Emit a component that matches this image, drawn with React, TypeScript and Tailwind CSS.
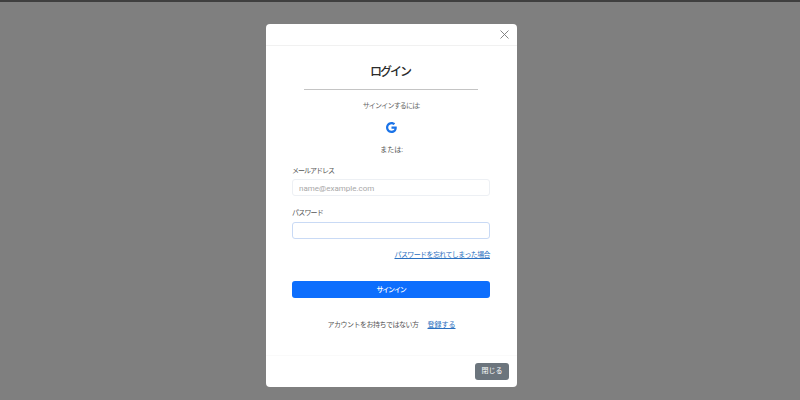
import React from 'react'

const FONT = "font-['Roboto','Noto_Sans_CJK_JP',sans-serif]"

function GoogleMark() {
	return (
		<svg width="11" height="11" viewBox="0 0 24 24" aria-hidden="true">
			<path
				fill="#1a73e8"
				d="M23.500 12.300c0-.9-.1-1.700-.2-2.400H12v4.600h6.500c-.3 1.500-1.100 2.700-2.400 3.600v3h3.800c2.300-2.100 3.600-5.200 3.600-8.800zM12 24c3.200 0 6-1.100 7.900-2.900l-3.800-3c-1.100.7-2.400 1.100-4.100 1.100-3.100 0-5.800-2.100-6.700-5H1.300v3.100C3.300 21.300 7.300 24 12 24zM5.300 14.200c-.5-1.500-.5-3 0-4.400V6.700H1.300c-1.700 3.300-1.700 7.300 0 10.600l4-3.100zM12 4.800c1.800 0 3.400.6 4.600 1.800l3.400-3.400C18 1.200 15.200 0 12 0 7.300 0 3.300 2.700 1.300 6.700l4 3.100c.9-2.900 3.600-5 6.700-5z"
			/>
		</svg>
	)
}

export default function App() {
	return (
		<div className={`${FONT} flex h-[400px] w-full flex-col bg-[#7f7f7f]`}>
			<div className="h-[2px] bg-[#3f3f3f]" />
			<div className="flex flex-1 justify-center pt-[22px] pr-[17px]">
				<div className="flex h-[363px] w-[251px] flex-col rounded-[4px] bg-white">
					<div className="flex h-[22px] shrink-0 items-center justify-end border-b border-[#f1f1f1] pr-[8px]">
						<svg width="9" height="9" viewBox="0 0 9 9" aria-hidden="true">
							<path d="M0.500 0.500L8.500 8.500M8.500 0.500L0.500 8.500" stroke="#777" strokeWidth="0.9" fill="none" />
						</svg>
					</div>
					<div className="flex flex-1 flex-col px-[26px]">
						<h1 className="mt-[18px] pr-[3px] text-center text-[12px] leading-[16px] font-medium tracking-[-2px] text-[#2b2b2b]">ログイン</h1>
						<div className="mx-[12px] mt-[9px] h-px w-[174px] bg-[#c4c4c4]" />
						<p className="mt-[11px] pr-[1px] text-center text-[7px] leading-[10px] tracking-[-0.8px] text-[#666]">サインインするには:</p>
						<div className="mt-[11px] flex justify-center">
							<GoogleMark />
						</div>
						<p className="mt-[12px] text-center text-[7px] leading-[10px] text-[#555]">または:</p>
						<label className="mt-[11px] block text-[7px] leading-[10px] tracking-[-1px] text-[#555]">メールアドレス</label>
						<input
							placeholder="name@example.com"
							className="mt-[3px] h-[17px] w-[198px] rounded-[3px] border border-[#edf0f4] bg-white px-[6px] pt-px text-[8px] outline-none placeholder:text-[#a8a8a8]"
						/>
						<label className="mt-[12px] block text-[7px] leading-[10px] tracking-[-0.8px] text-[#555]">パスワード</label>
						<input
							type="password"
							className="mt-[4px] h-[17px] w-[198px] rounded-[3px] border border-[#c9daf5] bg-white px-[6px] text-[8px] outline-none"
						/>
						<div className="mt-[11px] flex w-[198px] justify-end">
							<a className="text-[7px] leading-[10px] tracking-[-0.6px] text-[#2a70c0] underline">パスワードを忘れてしまった場合</a>
						</div>
						<button className="mt-[21px] h-[17px] w-[198px] rounded-[3px] bg-[#0d6efd] pt-px text-[7px] font-medium tracking-[-1.200px] text-white">サインイン</button>
						<div className="mt-[22px] flex items-center justify-center gap-[9px] text-[7px] leading-[10px]">
							<span className="tracking-[-0.5px] text-[#555]">アカウントをお持ちではない方</span>
							<a className="text-[#2a70c0] underline">登録する</a>
						</div>
					</div>
					<div className="flex h-[32px] shrink-0 items-center justify-end border-t border-[#fafafa] pr-[8px]">
						<button className="h-[17px] rounded-[3px] bg-[#6c757d] px-[6.500px] text-[7px] text-white">閉じる</button>
					</div>
				</div>
			</div>
		</div>
	)
}
